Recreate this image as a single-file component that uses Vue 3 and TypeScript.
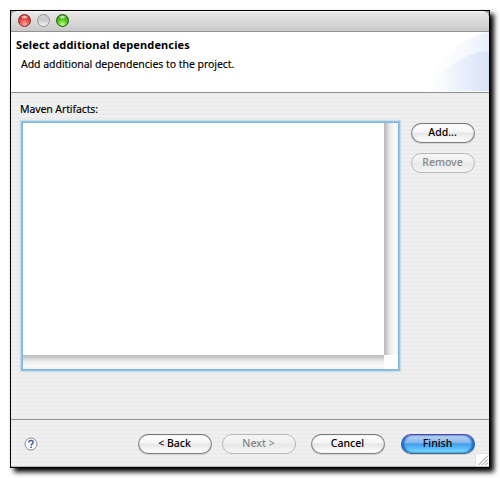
<script setup lang="ts">
import { ref } from 'vue'

interface WizardButton {
  label: string
  kind: string
}

const lights: string[] = ['red', 'gray', 'green']
const heading = ref('Select additional dependencies')
const sideButtons: WizardButton[] = [
  { label: 'Add...', kind: 'normal' },
  { label: 'Remove', kind: 'disabled' },
]
const wizardButtons: WizardButton[] = [
  { label: '< Back', kind: 'normal back' },
  { label: 'Next >', kind: 'disabled next' },
  { label: 'Cancel', kind: 'normal cancel' },
  { label: 'Finish', kind: 'primary' },
]
</script>

<template>
  <div class="stage">
    <main class="window">
      <div class="titlebar">
        <i v-for="c in lights" :key="c" class="light" :class="c"></i>
      </div>
      <header class="banner">
        <div class="titles">
          <h1>{{ heading }}</h1>
          <p>Add additional dependencies to the project.</p>
        </div>
        <svg class="swoosh" width="69" height="60" viewBox="0 0 69 60">
          <defs>
            <linearGradient id="outer" x1="0" x2="1" y1="0" y2="0">
              <stop offset="0" stop-color="#fff" />
              <stop offset="0.4" stop-color="#f8fafe" />
              <stop offset="1" stop-color="#e6edfb" />
            </linearGradient>
            <linearGradient id="inner" x1="0" x2="1" y1="0" y2="0">
              <stop offset="0" stop-color="#fff" />
              <stop offset="0.25" stop-color="#f8faff" />
              <stop offset="0.6" stop-color="#e8eefb" />
              <stop offset="1" stop-color="#d8e3f8" />
            </linearGradient>
          </defs>
          <path d="M5 59C16 31 39 5 69 0V59Z" fill="url(#outer)" opacity=".65" />
          <path d="M24 59C33 31 48 7 69 0V59Z" fill="url(#outer)" opacity=".7" />
          <path d="M7 59C23 36 43 21 69 19V59Z" fill="url(#inner)" />
        </svg>
      </header>
      <section class="content">
        <div class="label">Maven Artifacts:</div>
        <div class="row">
          <div class="list">
            <div class="items"></div>
            <div class="vbar"></div>
            <div class="hbar"></div>
            <div class="corner"></div>
          </div>
          <div class="side">
            <button v-for="b in sideButtons" :key="b.label" class="btn small" :class="b.kind">{{ b.label }}</button>
          </div>
        </div>
      </section>
      <footer class="footer">
        <svg class="help" width="14" height="14" viewBox="0 0 14 14" fill="none">
          <circle cx="7" cy="7" r="6" fill="#fbfcfe" stroke="#8291ab" stroke-width="1" />
          <path d="M4.9 5.5C4.9 2.9 9.2 2.9 9.2 5.3C9.2 6.8 7.1 6.8 7.1 8.5" stroke="#405f8d" stroke-width="1.5" />
          <path d="M7.1 9.4V11" stroke="#405f8d" stroke-width="1.6" />
        </svg>
        <button v-for="b in wizardButtons" :key="b.label" class="btn" :class="b.kind">{{ b.label }}</button>
        <svg class="grip" width="14" height="13" viewBox="0 0 14 13">
          <path d="M0 0H14V13H0Z" fill="#fff" />
          <path d="M.5 13V.5H14" fill="none" stroke="#dedede" />
          <path d="M3.5 12L13 2.5M7.2 12L13 6.2M10.5 12L13 9.5" stroke="#8c8c8c" stroke-width="1" />
        </svg>
      </footer>
    </main>
  </div>
</template>

<style>
body {
  background: #fff;
}
</style>

<style scoped>
.stage {
  width: 500px;
  height: 478px;
  padding: 10px;
  box-sizing: border-box;
  overflow: hidden;
  font: 11px/14px "Noto Sans", "Open Sans", sans-serif;
  color: #000;
}
.window {
  width: 480px;
  height: 458px;
  box-sizing: border-box;
  border: 1px solid #000;
  display: flex;
  flex-direction: column;
  background: repeating-linear-gradient(#f0f0f0 0 2px, #ebebeb 2px 4px);
  box-shadow: 4px 4px 5px 0 #000;
}
.titlebar {
  height: 21px;
  box-sizing: border-box;
  border-bottom: 1px solid #929292;
  background:
    radial-gradient(circle at 0 100%, #0000 4px, #999 5px) 100% 0 / 5px 5px no-repeat,
    radial-gradient(circle at 100% 100%, #0000 4px, #aaa 5px) 0 0 / 5px 5px no-repeat,
    linear-gradient(#fafafa 0, #e6e6e6 2px, #dcdcdc 9px, #c8c8c8 100%);
  display: flex;
  padding: 3px 0 0 7px;
  gap: 6px;
}
.light {
  width: 13px;
  height: 13px;
  box-sizing: border-box;
  border-radius: 50%;
}
.red {
  border: 1px solid #7b2c28;
  background: radial-gradient(ellipse 4px 2px at 50% 18%, #fff 0, #fff0 100%), radial-gradient(circle at 50% 85%, #ffb0a4 0, #ee4d48 45%, #b81e1d 100%);
}
.gray {
  border: 1px solid #989898;
  background: linear-gradient(#d0d0d0, #c9c9c9 45%, #f2f2f2);
}
.green {
  border: 1px solid #22580f;
  background: radial-gradient(ellipse 4px 2px at 50% 18%, #fff 0, #fff0 100%), radial-gradient(circle at 50% 85%, #c2ff8c 0, #54c91f 45%, #278008 100%);
}
.banner {
  height: 61px;
  box-sizing: border-box;
  border-bottom: 1px solid #8f8f8f;
  background: #fff;
  display: flex;
  justify-content: space-between;
}
.titles {
  padding: 6px 0 0 5px;
  white-space: nowrap;
}
h1 {
  margin: 0;
  font: bold 11px/14px "Noto Sans", sans-serif;
  letter-spacing: 0.12px;
}
p {
  margin: 5px 0 0 5px;
  font-size: 10.5px;
  letter-spacing: -0.04px;
  -webkit-text-stroke: 0.15px #000;
}
.content {
  height: 326px;
  box-sizing: border-box;
  padding: 9px 0 0 9px;
}
.label {
  height: 20px;
  line-height: 15px;
  font-size: 10.5px;
  letter-spacing: -0.1px;
  -webkit-text-stroke: 0.15px #000;
}
.row {
  display: flex;
  gap: 11px;
}
.list {
  width: 375px;
  height: 246px;
  margin: 1px 0 0 3px;
  display: grid;
  grid-template: 232px 14px / 361px 14px;
  background: #fff;
  box-shadow: 0 0 0 1px #84b6dc, 0 0 0 2px #94c2e4, 0 0 1px 3px #c9dcea;
}
.items {
  background: #fff;
}
.vbar {
  background: linear-gradient(90deg, #b9b9b9, #cfcfcf 3px, #ececec 6px, #f9f9f9 11px, #f1f1f1);
}
.hbar {
  background: linear-gradient(#b9b9b9, #cfcfcf 3px, #ececec 6px, #f9f9f9 11px, #f1f1f1);
}
.corner {
  background: #fff;
}
.side {
  display: flex;
  flex-direction: column;
  gap: 10px;
  padding: 1px 0 0 2px;
}
.btn {
  width: 74px;
  height: 20px;
  box-sizing: border-box;
  padding: 0 1px 2px 0;
  border: 1.5px solid #858585;
  border-top-color: #777;
  border-radius: 10px;
  font: 500 10.5px/16px "Noto Sans", sans-serif;
  color: #000;
  background: linear-gradient(#fff 0, #f5f5f5 45%, #e6e6e6 50%, #f3f3f3 75%, #fff 100%);
  box-shadow: 0 1px 1px #0002, inset 0 0 1px #0006;
}
.small {
  width: 64px;
}
.btn.disabled {
  border-color: #b9b9b9;
  color: #858585;
  background: linear-gradient(#f5f5f5 0, #f0f0f0 45%, #e8e8e8 50%, #f5f5f5 100%);
  box-shadow: none;
}
.btn.primary {
  border-color: #5548ab #265da9 #476b86;
  background: linear-gradient(#c3d7f3 0, #83b5ec 42%, #439ee9 50%, #58b9fa 72%, #83e7ff 100%);
  box-shadow: 0 1px 1px #0002, inset 2px 0 2px #1668c4, inset -2px 0 2px #1668c4;
}
.footer {
  height: 48px;
  box-sizing: border-box;
  border-top: 1px solid #929292;
  border-bottom: 1px solid #bdbdbd;
  display: flex;
  align-items: flex-start;
  padding: 14px 0 0 13px;
}
.help {
  margin-top: 3px;
}
.back {
  margin-left: 100px;
}
.next {
  margin-left: 10px;
}
.cancel {
  margin-left: 15px;
}
.primary {
  margin-left: 16px;
}
.grip {
  align-self: flex-end;
  margin-left: auto;
}
</style>
